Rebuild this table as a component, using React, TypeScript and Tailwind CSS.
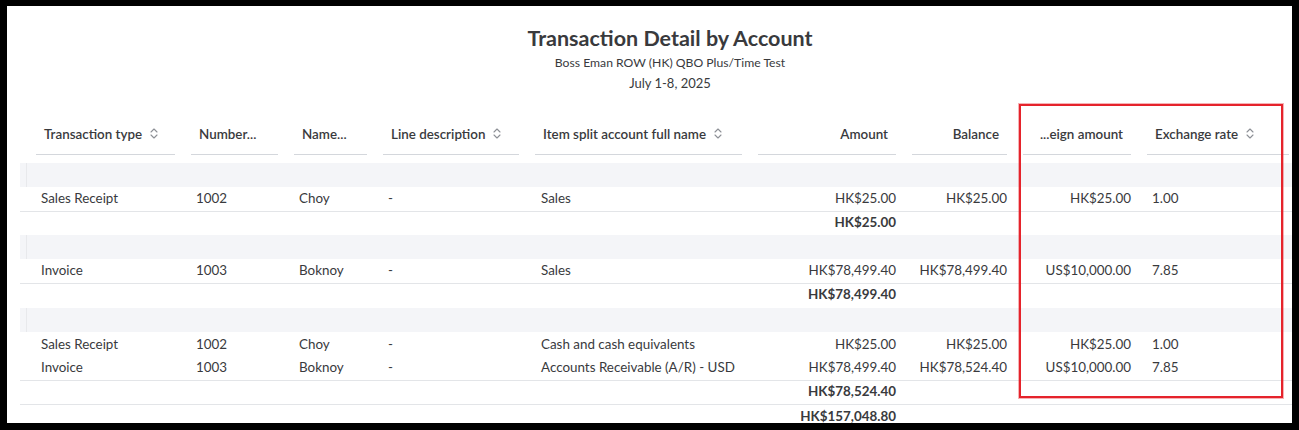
import React from 'react';

const font = { fontFamily: 'Lato, "Open Sans", "Liberation Sans", sans-serif' };

const COLS = 'grid grid-cols-[139px_87px_73px_136px_207px_138px_95px_108px_142px] gap-x-4 pl-4';

interface Row {
  type: string;
  num: string;
  name: string;
  desc: string;
  account: string;
  amount: string;
  balance: string;
  foreign: string;
  rate: string;
}

const groups: { rows: Row[]; subtotal: string; totalClass: string }[] = [
  {
    rows: [
      { type: 'Sales Receipt', num: '1002', name: 'Choy', desc: '-', account: 'Sales', amount: 'HK$25.00', balance: 'HK$25.00', foreign: 'HK$25.00', rate: '1.00' },
    ],
    subtotal: 'HK$25.00',
    totalClass: 'h-[23px] pb-[3px]',
  },
  {
    rows: [
      { type: 'Invoice', num: '1003', name: 'Boknoy', desc: '-', account: 'Sales', amount: 'HK$78,499.40', balance: 'HK$78,499.40', foreign: 'US$10,000.00', rate: '7.85' },
    ],
    subtotal: 'HK$78,499.40',
    totalClass: 'h-[24px] pb-[3px]',
  },
  {
    rows: [
      { type: 'Sales Receipt', num: '1002', name: 'Choy', desc: '-', account: 'Cash and cash equivalents', amount: 'HK$25.00', balance: 'HK$25.00', foreign: 'HK$25.00', rate: '1.00' },
      { type: 'Invoice', num: '1003', name: 'Boknoy', desc: '-', account: 'Accounts Receivable (A/R) - USD', amount: 'HK$78,499.40', balance: 'HK$78,524.40', foreign: 'US$10,000.00', rate: '7.85' },
    ],
    subtotal: 'HK$78,524.40',
    totalClass: 'h-[24px] pb-[6px] border-b border-[#e3e5e8]',
  },
];

function SortIcon() {
  return (
    <svg width="8" height="11" viewBox="0 0 8 11" fill="none" className="ml-[8px] shrink-0">
      <path d="M1 4 L4 1 L7 4" stroke="#8d9096" strokeWidth="1.1" strokeLinecap="round" strokeLinejoin="round" />
      <path d="M1 7 L4 10 L7 7" stroke="#8d9096" strokeWidth="1.1" strokeLinecap="round" strokeLinejoin="round" />
    </svg>
  );
}

function HeaderCell({ label, sort, right }: { label: string; sort?: boolean; right?: boolean }) {
  return (
    <div className="flex h-[43px] items-center border-b border-[#d4d7dc] pt-[2px]">
      <div className={`flex w-full items-center px-2 ${right ? 'justify-end' : ''}`}>
        <span className="text-[13.4px] font-semibold text-[#393a3d]">{label}</span>
        {sort && <SortIcon />}
      </div>
    </div>
  );
}

function DataRow({ r, last }: { r: Row; last: boolean }) {
  return (
    <div className={`${COLS} items-center text-[13.4px] text-[#393a3d] ${last ? 'h-[25px] pb-px border-b border-[#e3e5e8]' : 'h-[24px]'}`}>
      <div className="pl-[5px]">{r.type}</div>
      <div className="pl-[5px]">{r.num}</div>
      <div className="pl-[5px]">{r.name}</div>
      <div className="pl-[5px]">{r.desc}</div>
      <div className="pl-[6px] whitespace-nowrap">{r.account}</div>
      <div className="text-right">{r.amount}</div>
      <div className="text-right">{r.balance}</div>
      <div className="text-right">{r.foreign}</div>
      <div className="pl-[5px]">{r.rate}</div>
    </div>
  );
}

function TotalRow({ value, className }: { value: string; className: string }) {
  return (
    <div className={`${COLS} items-center text-[13.4px] font-bold text-[#393a3d] ${className}`}>
      <div className="col-start-6 text-right">{value}</div>
    </div>
  );
}

export default function App() {
  return (
    <div className="h-[430px] w-[1299px] bg-black pb-[7px] pl-[7px] pr-[7px] pt-[6px]" style={font}>
      <div className="relative h-[417px] w-[1285px] overflow-hidden bg-white">
        <div className="ml-[13px] w-[1300px]">
          {/* Report title */}
          <div className="flex flex-col items-center pt-[17px] text-[#393a3d]">
            <div className="text-[21.5px] font-bold leading-[30px]">Transaction Detail by Account</div>
            <div className="text-[12.2px] leading-[20px]">Boss Eman ROW (HK) QBO Plus/Time Test</div>
            <div className="text-[13px] leading-[20px]">July 1-8, 2025</div>
          </div>

          {/* Column headers */}
          <div className={`${COLS} mt-[19px]`}>
            <HeaderCell label="Transaction type" sort />
            <HeaderCell label="Number..." />
            <HeaderCell label="Name..." />
            <HeaderCell label="Line description" sort />
            <HeaderCell label="Item split account full name" sort />
            <HeaderCell label="Amount" right />
            <HeaderCell label="Balance" right />
            <HeaderCell label="...eign amount" right />
            <HeaderCell label="Exchange rate" sort />
          </div>

          <div className="mt-[8px]">
            {groups.map((g, gi) => (
              <div key={gi}>
                <div className="flex h-[24px] bg-[#f4f5f8]">
                  <div className="ml-[6px] w-px bg-[#e8e9ec]" />
                </div>
                {g.rows.map((r, ri) => (
                  <DataRow key={ri} r={r} last={ri === g.rows.length - 1} />
                ))}
                <TotalRow value={g.subtotal} className={g.totalClass} />
              </div>
            ))}
            <TotalRow value="HK$157,048.80" className="h-[20px] pt-px" />
          </div>
        </div>

        {/* Highlight annotation */}
        <div className="absolute left-[1012px] top-[98px] h-[294px] w-[264px] border-2 border-[#e5232b] shadow-[0_0_0_1px_rgba(229,35,43,0.35)]" />
      </div>
    </div>
  );
}
